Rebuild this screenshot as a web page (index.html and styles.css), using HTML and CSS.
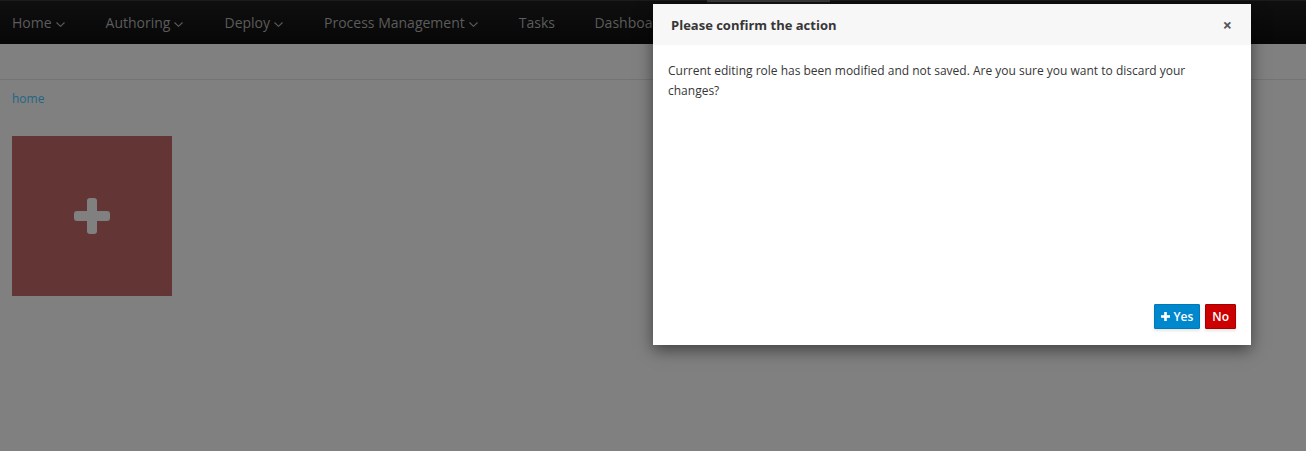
FILE: index.html
```html
<!DOCTYPE html>
<html lang="en">
<head>
<meta charset="utf-8">
<title>Confirm</title>
<link rel="stylesheet" href="styles.css">
</head>
<body>
<nav class="navbar">
  <a class="nav-item first">Home <svg class="chev" width="9" height="5" viewBox="0 0 9 5"><polyline points="0.5,0.5 4.5,4.3 8.5,0.5" fill="none" stroke="currentColor" stroke-width="1.1"/></svg></a>
  <a class="nav-item">Authoring <svg class="chev" width="9" height="5" viewBox="0 0 9 5"><polyline points="0.5,0.5 4.5,4.3 8.5,0.5" fill="none" stroke="currentColor" stroke-width="1.1"/></svg></a>
  <a class="nav-item">Deploy <svg class="chev" width="9" height="5" viewBox="0 0 9 5"><polyline points="0.5,0.5 4.5,4.3 8.5,0.5" fill="none" stroke="currentColor" stroke-width="1.1"/></svg></a>
  <a class="nav-item">Process Management <svg class="chev" width="9" height="5" viewBox="0 0 9 5"><polyline points="0.5,0.5 4.5,4.3 8.5,0.5" fill="none" stroke="currentColor" stroke-width="1.1"/></svg></a>
  <a class="nav-item">Tasks</a>
  <a class="nav-item dash">Dashboards <svg class="chev" width="9" height="5" viewBox="0 0 9 5"><polyline points="0.5,0.5 4.5,4.3 8.5,0.5" fill="none" stroke="currentColor" stroke-width="1.1"/></svg></a>
  <a class="nav-item active" aria-hidden="true"></a>
</nav>
<div class="subbar"></div>
<main class="content">
  <div class="breadcrumb"><a class="crumb">home</a></div>
  <div class="tile">
    <svg width="36" height="36" viewBox="0 0 36 36"><rect x="13" y="0" width="10" height="36" rx="3" fill="#808080"/><rect x="0" y="13" width="36" height="10" rx="3" fill="#808080"/></svg>
  </div>
</main>

<div class="modal">
  <div class="modal-header">
    <h4 class="modal-title">Please confirm the action</h4>
    <span class="close">×</span>
  </div>
  <div class="modal-body">Current editing role has been modified and not saved. Are you sure you want to discard your changes?</div>
  <div class="modal-footer">
    <button class="btn btn-primary"><svg width="9" height="9" viewBox="0 0 9 9"><rect x="3.2" y="0" width="2.6" height="9" fill="#fff"/><rect x="0" y="3.2" width="9" height="2.6" fill="#fff"/></svg>Yes</button>
    <button class="btn btn-danger">No</button>
  </div>
</div>
</body>
</html>
```
FILE: styles.css
```css
html, body {
  margin: 0;
  padding: 0;
}
body {
  background: #808080;
  font-family: "Open Sans", "Liberation Sans", sans-serif;
  width: 1306px;
  height: 451px;
  overflow: hidden;
  position: relative;
}
.navbar {
  height: 44px;
  box-sizing: border-box;
  border-top: 1px solid #1b1b1b;
  background: linear-gradient(#0f0f0f, #070707);
  display: flex;
  align-items: stretch;
}
.nav-item {
  display: flex;
  align-items: center;
  gap: 4px;
  padding: 0 20.5px;
  color: #5c5c5c;
  font-size: 14px;
  white-space: nowrap;
}
.nav-item.first {
  padding-left: 12px;
}
.nav-item.dash {
  padding-left: 19px;
}
.nav-item.active {
  margin-top: -1px;
  border-top: 2px solid #3a3a3a;
  background: #141414;
  padding: 0;
  width: 123px;
}
.chev {
  margin-top: 3px;
}
.subbar {
  height: 35px;
  border-bottom: 1px solid #747474;
}
.content {
  padding: 0 12px;
}
.breadcrumb {
  padding-top: 10px;
  line-height: 18px;
  font-size: 12px;
}
.crumb {
  color: #1e6686;
}
.tile {
  margin-top: 28px;
  width: 160px;
  height: 160px;
  background: #633535;
  display: flex;
  align-items: center;
  justify-content: center;
}
.modal {
  position: absolute;
  left: 653px;
  top: 4px;
  width: 598px;
  height: 341px;
  background: #fff;
  box-shadow: 0 5px 15px rgba(0, 0, 0, 0.5);
  display: flex;
  flex-direction: column;
}
.modal-header {
  height: 41px;
  box-sizing: border-box;
  background: #f7f7f7;
  display: flex;
  align-items: center;
  justify-content: space-between;
  padding: 0 18px 0 18px;
}
.modal-title {
  margin: 0;
  font-size: 13px;
  font-weight: 700;
  color: #363636;
}
.close {
  font-size: 16px;
  font-weight: 700;
  color: #555;
  line-height: 1;
  margin-right: 1px;
}
.modal-body {
  flex: 1;
  padding: 16px 15px 0 15px;
  font-size: 12px;
  line-height: 20px;
  color: #363636;
}
.modal-footer {
  display: flex;
  justify-content: flex-end;
  gap: 5px;
  padding: 0 15px 16px 15px;
}
.btn {
  height: 25px;
  box-sizing: border-box;
  border: 1px solid;
  border-radius: 1px;
  padding: 0 6px;
  font-family: inherit;
  font-size: 12px;
  font-weight: 600;
  color: #fff;
  display: flex;
  align-items: center;
  gap: 3px;
  box-shadow: 0 2px 3px rgba(3, 3, 3, 0.1);
}
.btn-primary {
  background: #0088ce;
  border-color: #0079b8;
}
.btn-danger {
  background: #c00;
  border-color: #a30000;
}
```
